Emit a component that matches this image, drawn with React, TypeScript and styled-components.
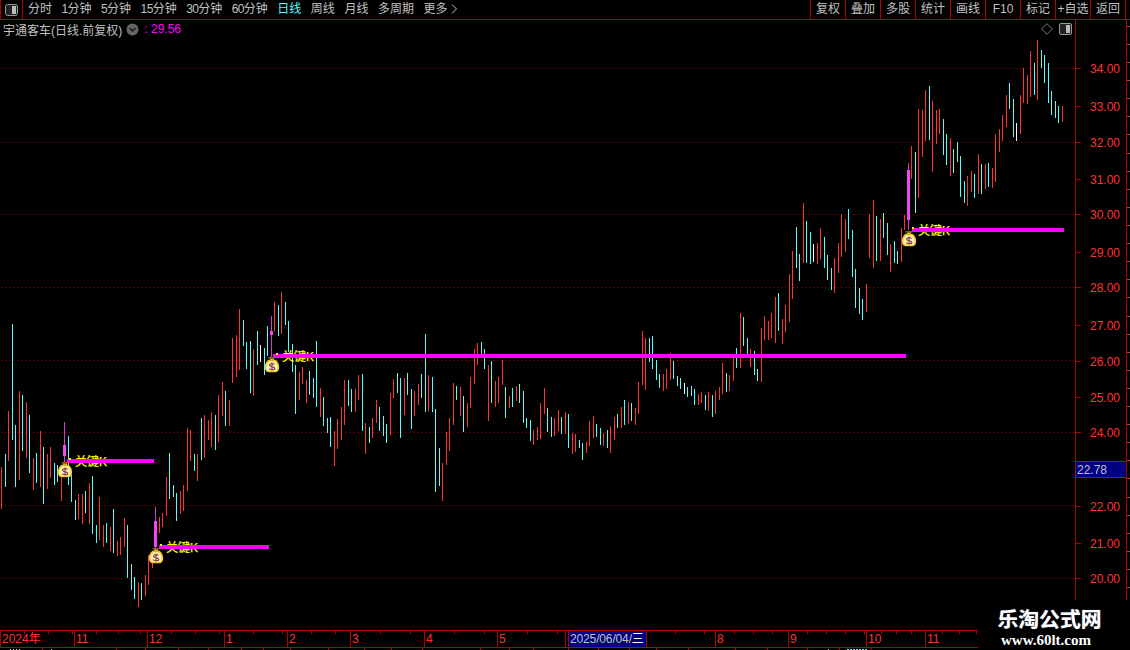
import React from "react";
import styled, { createGlobalStyle } from "styled-components";

const RED_LINE = "#b00000";
const RED_TEXT = "#ff3232";
const CYAN = "#54fcfc";
const GREY = "#c0c0c0";

const GlobalStyle = createGlobalStyle`
  html, body { margin: 0; padding: 0; background: #000; }
  body { font-family: "Liberation Sans", "Noto Sans CJK SC", sans-serif; font-size: 12px; }
`;

const Page = styled.div`
  position: relative;
  width: 1130px;
  height: 650px;
  overflow: hidden;
  background: #000;
  color: ${GREY};
`;

const Toolbar = styled.div`
  display: flex;
  align-items: stretch;
  height: 19px;
  border-bottom: 1px solid ${RED_LINE};
  line-height: 19px;
`;

const LayoutButton = styled.div`
  display: flex;
  align-items: center;
  justify-content: center;
  width: 23px;
  border-left: 1px solid ${RED_LINE};
  border-right: 1px solid ${RED_LINE};
  box-sizing: border-box;
  margin-right: 5px;
`;

const PeriodList = styled.div`
  display: flex;
  gap: 9.5px;
  white-space: nowrap;
`;

const Period = styled.span<{ $active?: boolean }>`
  color: ${(p) => (p.$active ? CYAN : GREY)};
`;

const Num = styled.span`
  letter-spacing: -0.65px;
`;

const ActionList = styled.div`
  display: flex;
  margin-left: auto;
  margin-right: 4px;
`;

const Action = styled.div`
  width: 35px;
  box-sizing: border-box;
  border-left: 1px solid ${RED_LINE};
  text-align: center;
  white-space: nowrap;
  &:last-child { width: 36px; border-right: 1px solid ${RED_LINE}; }
`;

const ChartRow = styled.div`
  position: relative;
  display: flex;
  height: 610px;
`;

const Svg = styled.svg`
  display: block;
  flex: none;
`;

const InfoLine = styled.div`
  position: absolute;
  left: 3px;
  top: 0;
  display: flex;
  align-items: center;
  height: 18px;
  white-space: nowrap;
`;

const Quote = styled.span`
  color: #ff00ff;
  margin-left: 5px;
`;

const Drop = styled.svg`
  display: block;
  margin-left: 4px;
`;

const CornerIcons = styled.div`
  position: absolute;
  left: 1041px;
  top: 3px;
  display: flex;
  align-items: center;
  gap: 6px;
`;

const DateAxis = styled.div`
  display: flex;
  width: 978px;
  height: 16px;
  border-top: 1px solid ${RED_LINE};
  border-bottom: 1px solid ${RED_LINE};
  box-sizing: content-box;
  line-height: 17px;
  color: ${RED_TEXT};
`;

const MonthCell = styled.div<{ $w: number; $tick: number }>`
  flex: none;
  box-sizing: border-box;
  width: ${(p) => p.$w}px;
  border-left: 1px solid ${RED_LINE};
  padding-left: 1px;
  overflow: hidden;
  white-space: nowrap;
  background: repeating-linear-gradient(90deg, transparent 0 ${(p) => p.$tick - 1}px, ${RED_LINE} ${(p) => p.$tick - 1}px ${(p) => p.$tick}px) no-repeat;
  background-size: 100% 3px;
`;

const DateBadge = styled.div`
  flex: none;
  width: 77px;
  box-sizing: border-box;
  background: #000080;
  color: ${GREY};
  outline: 1px solid ${RED_LINE};
  letter-spacing: -0.14px;
  padding-left: 1px;
  white-space: nowrap;
  overflow: hidden;
`;

const Weekday = styled.span`
  color: #ffffff;
`;

const SubStrip = styled.svg`
  display: block;
`;

const Watermark = styled.div`
  position: absolute;
  left: 978px;
  top: 600px;
  width: 152px;
  height: 50px;
  box-sizing: border-box;
  padding: 8px 0 0 19.500px;
  background: #000;
  color: #fff;
  font-weight: 700;
`;

const WatermarkTitle = styled.div`
  font-size: 20.800px;
  line-height: 24px;
  white-space: nowrap;
  text-shadow: 0 0 1px #9ab;
`;

const WatermarkSite = styled.div`
  font-family: "Liberation Serif", serif;
  font-size: 15px;
  line-height: 16px;
  margin: 0 0 0 3.500px;
  white-space: nowrap;
`;

const BARS =
  "467,509r 454,487c 411,461r 324,440c 425,487c 391,480r 395,451c 402,458r 415,473c 458,490r 453,483c 431,487r 447,504c 454,489r 447,478r 463,485c 465,482c 467,501r 422,462m 436,485c 475,502c " +
  "500,520c 494,519r 494,524r 491,513c 483,524r 476,534c 525,543c 497,540r 525,547r 523,543c 527,551r 509,553c 541,556r 537,555r 518,547r 525,578c 564,590c 577,599c 582,607r 583,600c " +
  "575,596r 555,585r 563,568r 507,551m 517,533r 513,527r 477,516r 453,499c 485,497c 493,521c 491,514r 485,511r 428,491r 430,461r 454,471c 454,481r 418,460c 415,458r 420,440r 412,447r " +
  "415,450c 395,442r 382,416r 391,426c 400,426r 338,383r 335,377r 309,370r 320,346c 342,369c 341,393c 349,396r 331,365c 345,362w 348,375c 326,356c 316,357m 302,331r 305,336c 292,334r " +
  "302,325c 321,352c 344,372c 365,414c 372,400r 367,384r 380,403r 371,395c 378,398c 341,407c 388,417r 397,426c 418,433c 417,447c 431,466r 419,449r 407,440r 380,425r 380,406c 389,412c " +
  "389,412r 375,400r 374,431c 423,454r 427,443c 418,438r 400,423r 407,431c 416,436c 424,443c 393,435r 379,398r 373,393c 378,438c 378,415r 373,395c 389,429c 391,416r 384,405r 374,398c " +
  "334,412c 375,411r 377,412c 409,492c 448,486c 463,501r 432,465r 418,451r 383,425r 386,400c 387,416r 396,432c 403,427r 377,408r 349,384r 343,365r 342,358c 349,369c 365,421r 361,403c " +
  "381,407r 377,403r 360,385r 387,418c 396,408r 388,407c 386,401r 384,403c 391,423c 418,428c 420,441c 430,445r 427,440r 403,439r 388,414r 408,432c 417,437c 418,436r 410,431r 417,434c " +
  "412,434r 414,448c 433,454r 434,452r 440,448c 443,460c 442,453r 421,446r 416,438r 424,437c 428,445c 433,446r 430,448c 426,453r 417,440r 414,428c 407,428r 400,425c 402,424r 403,421c " +
  "408,425r 382,414r 331,385r 338,390r 338,362c 336,369c 360,380c 374,388c 374,391r 369,389r 353,380r 361,379c 376,386c 378,389c 383,394w 387,397c 386,396c 389,405c 394,405r 392,403r " +
  "395,410c 392,411r 395,417c 391,414r 387,400r 363,394r 373,392c 375,391r 358,381r 348,368c 313,368r 317,346c 338,354c 349,367r 351,375c 369,381c 328,382r 316,340r 321,340r 313,338r " +
  "297,343r 293,331c 319,344r 305,332r 274,322r 251,299r 227,268c 254,281c 203,263r 221,263c 232,264c 244,262w 243,264r 228,259r 237,268c 255,280c 268,290c 258,293r 243,273r 214,257r " +
  "219,252r 209,239c 230,277c 269,308c 288,314c 299,320c 284,312r 214,258r 200,268r 216,261c 219,261r 213,238c 223,255c 244,272r 241,263c 251,264c 228,262r 215,230r 163,230m 146,179r " +
  "152,213c 109,198r 110,157r 90,141r 86,140c 101,172r 110,144r 109,134r 119,155c 134,165c 138,176r 149,173c 142,162c 156,197c 181,203c 176,206r 171,192r 174,198c 154,194r 164,194c " +
  "164,189r 163,187c 168,188r 134,182r 129,152r 115,141r 95,127r 83,109c 99,137c 123,141w 95,134r 68,103r 75,104r 51,97r 63,95c 40,100r 50,68c 55,83c 63,103c 91,115c 101,118c 106,123c 106,122r";

const COLORS: Record<string, string> = { r: "#ff3232", c: CYAN, w: "#ffffff", m: "#d040d0" };

const bars = BARS.trim().split(/\s+/).map((s, i) => {
  const kind = s.slice(-1);
  const [top, bottom] = s.slice(0, -1).split(",").map(Number);
  return { x: Math.floor(1.5 + 3.5 * i), top, bottom, fill: COLORS[kind] };
});

const BODIES = [
  { x: 63, y: 445, w: 3, h: 11 },
  { x: 154, y: 521, w: 3, h: 26 },
  { x: 270, y: 331, w: 3, h: 4 },
  { x: 907, y: 170, w: 3, h: 50 },
];

const SIGNALS = [
  { barX: 67, barEnd: 154, barY: 459, labelX: 75, bagX: 65, bagY: 470 },
  { barX: 159, barEnd: 269, barY: 545, labelX: 166, bagX: 156, bagY: 556 },
  { barX: 273, barEnd: 906, barY: 354, labelX: 282, bagX: 272, bagY: 365 },
  { barX: 912, barEnd: 1064, barY: 228, labelX: 918, bagX: 909, bagY: 239 },
];

const GRID = [68, 142, 214, 287, 360, 432, 505, 578];

const PRICES: [string, number][] = [
  ["34.00", 68], ["33.00", 106], ["32.00", 142], ["31.00", 179], ["30.00", 214], ["29.00", 252], ["28.00", 287],
  ["27.00", 325], ["26.00", 361], ["25.00", 397], ["24.00", 432], ["22.00", 506], ["21.00", 543], ["20.00", 578],
];

const PERIODS: { label: React.ReactNode; active?: boolean }[] = [
  { label: "分时" },
  { label: <><Num>1</Num>分钟</> },
  { label: <><Num>5</Num>分钟</> },
  { label: <><Num>15</Num>分钟</> },
  { label: <><Num>30</Num>分钟</> },
  { label: <><Num>60</Num>分钟</> },
  { label: "日线", active: true },
  { label: "周线" },
  { label: "月线" },
  { label: "多周期" },
  { label: <>更多 <svg width="7" height="10" viewBox="0 0 7 10" style={{ verticalAlign: -1 }}><path d="M1 .5 5.5 5 1 9.5" fill="none" stroke={GREY} /></svg></> },
];

const ACTIONS = ["复权", "叠加", "多股", "统计", "画线", "F10", "标记", "+自选", "返回"];

const MONTHS_A = [
  { w: 74, tick: 24, label: "2024年" },
  { w: 73, tick: 22, label: "11" },
  { w: 77, tick: 24, label: "12" },
  { w: 63, tick: 29, label: "1" },
  { w: 63, tick: 24, label: "2" },
  { w: 74, tick: 30, label: "3" },
  { w: 73, tick: 30, label: "4" },
  { w: 68, tick: 30, label: "5" },
  { w: 4, tick: 30, label: "6" },
];

const MONTHS_B = [
  { w: 69, tick: 29, label: "" },
  { w: 73, tick: 19, label: "8" },
  { w: 78, tick: 19, label: "9" },
  { w: 59, tick: 15, label: "10" },
  { w: 53, tick: 17, label: "11" },
];

const STRIP_RED = [42, 116, 145, 178, 208, 241, 263, 290, 328, 364, 391, 422, 480, 509, 533, 568, 598, 629, 656, 688, 735, 767, 807, 839, 871];
const STRIP_WHITE = [10, 13, 16, 19, 51, 828];
const STRIP_CYAN = [847, 850, 853, 856, 859, 862, 865];

function MoneyBag({ x, y }: { x: number; y: number }) {
  return (
    <g transform={`translate(${x} ${y})`}>
      <path d="M-3-4.5C-7.5-1-7.5 6.500-3 6.500H3C7.500 6.500 7.500-1 3-4.500Z" fill="#fff4c0" stroke="#f0cc20" strokeWidth="1.6" />
      <rect x="-3.500" y="-8" width="7" height="1.500" fill="#7a6420" />
      <rect x="-2" y="-6.500" width="4" height="2.500" fill="#d8b020" />
      <path d="M2.500-.5C1.500-1.800-2.500-1.800-2.500.3S2.800 1.500 2.800 3.400-1.500 5-2.800 3.700M0-2.500V5.500" fill="none" stroke="#8a3f3f" strokeWidth="1.200" />
    </g>
  );
}

function PricePlot() {
  return (
    <Svg width={1075} height={610} viewBox="0 20 1075 610" shapeRendering="crispEdges">
      {GRID.map((y) => (
        <line key={y} x1={1} x2={1075} y1={y + 0.5} y2={y + 0.5} stroke="#a00000" strokeDasharray="1 3" />
      ))}
      {bars.map((b) => (
        <rect key={b.x} x={b.x} y={b.top} width={1} height={b.bottom - b.top} fill={b.fill} />
      ))}
      {BODIES.map((b) => (
        <rect key={b.x} x={b.x} y={b.y} width={b.w} height={b.h} fill="#f048f0" />
      ))}
      {SIGNALS.map((s) => (
        <g key={s.barX}>
          <text x={s.labelX} y={s.barY + 6.5} fontSize={12} fill="#ffff00" stroke="#ffff00" strokeWidth={0.25} shapeRendering="auto">关键K</text>
          <rect x={s.barX} y={s.barY} width={s.barEnd - s.barX} height={4} fill="#ff00ff" />
          <rect x={s.labelX - 6} y={s.barY - 1} width={2} height={2} fill="#ffff00" />
        </g>
      ))}
      <g shapeRendering="auto">
        {SIGNALS.map((s) => (
          <MoneyBag key={s.bagX} x={s.bagX} y={s.bagY} />
        ))}
      </g>
    </Svg>
  );
}

function PriceAxis() {
  const minor = Array.from({ length: 32 }, (_, k) => Math.round(587 - 18.1 * k));
  return (
    <Svg width={55} height={610} viewBox="1075 20 55 610" shapeRendering="crispEdges">
      <rect x={1075} y={20} width={1} height={580} fill={RED_LINE} />
      <rect x={1126} y={20} width={1} height={580} fill={RED_LINE} />
      {minor.map((y) => (
        <rect key={y} x={1127} y={y} width={3} height={1} fill="#b04040" />
      ))}
      {PRICES.map(([label, y]) => (
        <g key={label}>
          <rect x={1076} y={y} width={5} height={1} fill={RED_LINE} />
          <text x={1090} y={y + 5} fontSize={12} fill={RED_TEXT} shapeRendering="auto">{label}</text>
        </g>
      ))}
      <rect x={1076} y={462} width={50} height={15} fill="#000080" />
      <rect x={1076} y={461} width={50} height={1} fill={RED_LINE} />
      <rect x={1076} y={477} width={50} height={1} fill={RED_LINE} />
      <text x={1077} y={474} fontSize={12} fill={GREY} shapeRendering="auto">22.78</text>
    </Svg>
  );
}

export default function App() {
  return (
    <Page>
      <GlobalStyle />
      <Toolbar>
        <LayoutButton>
          <svg width="13" height="12" viewBox="0 0 13 12">
            <rect x=".5" y=".5" width="12" height="11" rx="2" fill="#222" stroke="#999" />
            <rect x="7" y="2" width="4" height="8" fill="#bbb" />
          </svg>
        </LayoutButton>
        <PeriodList>
          {PERIODS.map((p, i) => (
            <Period key={i} $active={p.active}>{p.label}</Period>
          ))}
        </PeriodList>
        <ActionList>
          {ACTIONS.map((a) => (
            <Action key={a}>{a}</Action>
          ))}
        </ActionList>
      </Toolbar>
      <ChartRow>
        <PricePlot />
        <PriceAxis />
        <InfoLine>
          宇通客车(日线.前复权)
          <Drop width="13" height="13" viewBox="0 0 13 13">
            <circle cx="6.500" cy="6.500" r="6" fill="#666" />
            <path d="M3.500 5 6.500 8 9.500 5" fill="none" stroke="#111" strokeWidth="1.400" />
          </Drop>
          <Quote>: 29.56</Quote>
        </InfoLine>
        <CornerIcons>
          <svg width="12" height="12" viewBox="0 0 12 12">
            <path d="M6 .7 11.300 6 6 11.300 .7 6Z" fill="none" stroke="#777" />
          </svg>
          <svg width="13" height="12" viewBox="0 0 13 12">
            <rect x=".5" y=".5" width="12" height="11" rx="1.500" fill="#222" stroke="#999" />
            <rect x="7" y="2" width="4" height="8" fill="#bbb" />
          </svg>
        </CornerIcons>
      </ChartRow>
      <DateAxis>
        {MONTHS_A.map((m, i) => (
          <MonthCell key={i} $w={m.w} $tick={m.tick}>{m.label}</MonthCell>
        ))}
        <DateBadge>2025/06/04/<Weekday>三</Weekday></DateBadge>
        {MONTHS_B.map((m, i) => (
          <MonthCell key={i} $w={m.w} $tick={m.tick}>{m.label}</MonthCell>
        ))}
      </DateAxis>
      <SubStrip width={978} height={3} viewBox="0 0 978 3" shapeRendering="crispEdges">
        {STRIP_RED.map((x) => <rect key={x} x={x} y={0} width={1} height={3} fill={RED_LINE} />)}
        {STRIP_WHITE.map((x) => <rect key={x} x={x} y={1} width={1} height={2} fill="#ddd" />)}
        {STRIP_CYAN.map((x) => <rect key={x} x={x} y={1} width={2} height={2} fill={CYAN} />)}
      </SubStrip>
      <Watermark>
        <WatermarkTitle>乐淘公式网</WatermarkTitle>
        <WatermarkSite>www.60lt.com</WatermarkSite>
      </Watermark>
    </Page>
  );
}
